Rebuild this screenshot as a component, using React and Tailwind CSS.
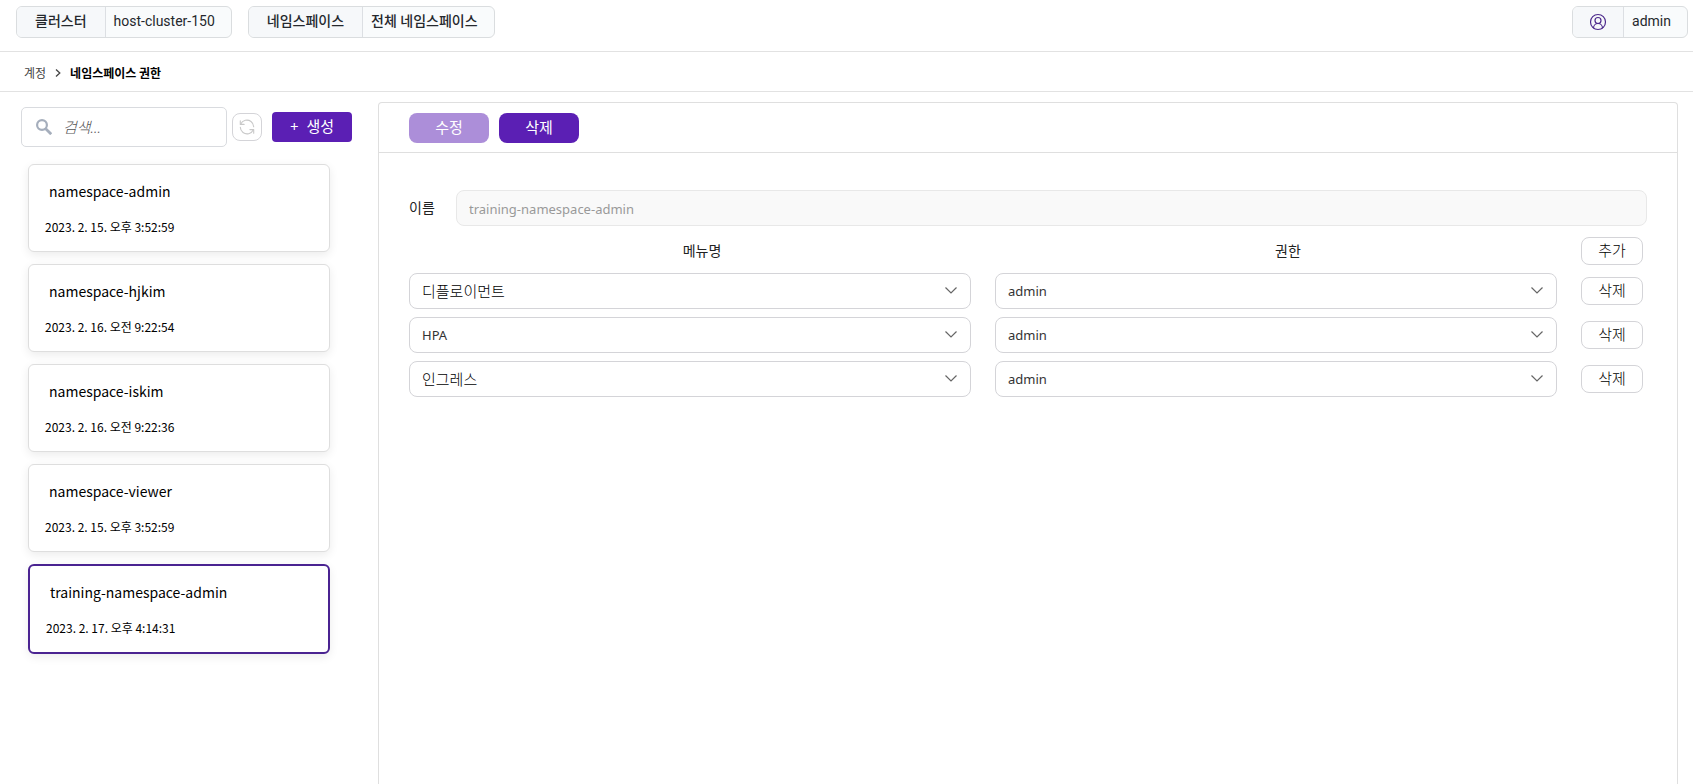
import { useState } from "react";
import { CircleUserRound } from "lucide-react";

const namespaces = [
  { name: "namespace-admin", date: "2023. 2. 15. 오후 3:52:59" },
  { name: "namespace-hjkim", date: "2023. 2. 16. 오전 9:22:54" },
  { name: "namespace-iskim", date: "2023. 2. 16. 오전 9:22:36" },
  { name: "namespace-viewer", date: "2023. 2. 15. 오후 3:52:59" },
  { name: "training-namespace-admin", date: "2023. 2. 17. 오후 4:14:31" },
];

const permissions = [
  { menu: "디플로이먼트", role: "admin" },
  { menu: "HPA", role: "admin" },
  { menu: "인그레스", role: "admin" },
];

const menuOptions = ["디플로이먼트", "HPA", "인그레스"];
const roleOptions = ["admin"];

const boxBase =
  "flex h-8 overflow-hidden rounded-md border border-[#dadddf] bg-[#f9fbfc] text-[#25282d]";
const boxLabel =
  "border-r border-[#dcdfe3] bg-[#f6f8fa] px-[18px] pt-1 leading-5 font-medium";
const smallButton =
  "h-7 w-[62px] rounded-[8px] border border-[#d4d4d8] bg-white pb-[2px] text-[15px] leading-5 font-light text-black";
const primaryButton = "h-[30px] w-20 bg-[#5b1fb4] pb-[2px] text-[15px] leading-5 text-white";
const gridRow = "grid grid-cols-[1fr_1fr_66px] items-center gap-x-6";

function SearchIcon() {
  return (
    <svg viewBox="0 0 16 16" className="h-4 w-4 shrink-0" fill="none" stroke="#a5aebc">
      <circle cx="6" cy="6" r="4.9" strokeWidth="2.2" />
      <path d="M9.7 9.7 15.2 15.2" strokeWidth="2.8" />
    </svg>
  );
}

function RefreshIcon() {
  return (
    <svg
      viewBox="0 0 16 16"
      className="h-4 w-4"
      fill="none"
      stroke="#c8c8c8"
      strokeWidth="1.1"
      strokeLinecap="round"
      strokeLinejoin="round"
    >
      <path d="M1.3 1.8v3.6h3.8" />
      <path d="M1.6 5.2C3.6 1 8.6 0 12 2.5c1.7 1.3 2.6 3.2 2.7 5.2" />
      <path d="M14.7 14.2v-3.6h-3.8" />
      <path d="M14.4 10.8C12.4 15 7.4 16 4 13.5 2.3 12.2 1.4 10.3 1.3 8.3" />
    </svg>
  );
}

function SelectBox({ label, value, options, onChange }) {
  const isLatin = /^[a-z]/i.test(value);

  return (
    <div className="relative">
      <select
        aria-label={label}
        value={value}
        onChange={(e) => onChange(e.target.value)}
        className={`h-9 w-full appearance-none rounded-[8px] border border-[#d4d4d8] bg-white px-3 ${
          isLatin ? "pt-[2px] text-[13px] text-[#333]" : "text-[15px] font-light text-black"
        }`}
      >
        {options.map((option) => (
          <option key={option}>{option}</option>
        ))}
      </select>
      <svg
        viewBox="0 0 12 7"
        className="pointer-events-none absolute top-[14px] right-[14px] h-[7px] w-3"
        fill="none"
        stroke="#666"
        strokeWidth="1.2"
      >
        <path d="M.5.5 6 6 11.5.5" />
      </svg>
    </div>
  );
}

export default function App() {
  const [selected, setSelected] = useState("training-namespace-admin");
  const [rows, setRows] = useState(permissions);

  const updateRow = (index, patch) =>
    setRows(rows.map((row, i) => (i === index ? { ...row, ...patch } : row)));

  return (
    <div className="flex min-h-screen flex-col bg-white font-['Noto_Sans','Noto_Sans_CJK_KR',sans-serif] text-black">
      <header className="flex h-[52px] items-start gap-4 border-b border-[#e2e2e2] pt-[6px] pr-[5px] pl-4 font-[Roboto,'Noto_Sans_CJK_KR',sans-serif] text-sm">
        <div className={boxBase}>
          <span className={boxLabel}>클러스터</span>
          <span className="pt-1 pr-4 pl-2 leading-5">host-cluster-150</span>
        </div>
        <div className={boxBase}>
          <span className={boxLabel}>네임스페이스</span>
          <span className="pt-1 pr-4 pl-2 leading-5 font-medium">전체 네임스페이스</span>
        </div>
        <div className={`${boxBase} ml-auto`}>
          <span className="flex items-center border-r border-[#dcdfe3] bg-[#f6f8fa] px-4">
            <CircleUserRound className="h-[18px] w-[18px] text-[#4d2a8c]" strokeWidth={1.6} />
          </span>
          <span className="pt-1 pr-4 pl-2 leading-5">admin</span>
        </div>
      </header>

      <nav className="flex h-10 items-center border-b border-[#e2e2e2] pt-[2px] pl-6 font-['Noto_Sans_CJK_KR',sans-serif] text-xs">
        <a href="#account" className="text-[#444]">계정</a>
        <svg viewBox="0 0 6 8" className="mx-[9px] h-2 w-[6px]" fill="none" stroke="#444" strokeWidth="1.3">
          <path d="M1 .5 4.8 4 1 7.5" />
        </svg>
        <span className="font-bold">네임스페이스 권한</span>
      </nav>

      <div className="flex flex-1">
        <aside className="w-[378px] shrink-0 pt-[15px] pl-[21px]">
          <div className="flex items-center">
            <label className="flex h-10 w-[206px] items-center gap-[11px] rounded-[5px] border border-[#d9dbdf] px-[14px]">
              <SearchIcon />
              <input
                type="text"
                aria-label="검색"
                placeholder="검색..."
                className="w-full min-w-0 text-[15px] font-light italic outline-none placeholder:text-[#555]"
              />
            </label>
            <button
              aria-label="새로고침"
              className="ml-[5px] flex h-7 w-[30px] items-center justify-center rounded-[8px] border border-[#d4d4d8]"
            >
              <RefreshIcon />
            </button>
            <button className={`${primaryButton} ml-[10px] rounded-[4px]`}>
              +&nbsp; 생성
            </button>
          </div>

          <div className="mt-[17px] mr-12 ml-[7px] flex flex-col gap-3 font-['Noto_Sans_CJK_KR',sans-serif]">
            {namespaces.map((item) => (
              <button
                key={item.name}
                onClick={() => setSelected(item.name)}
                className={`flex flex-col items-start gap-[14px] rounded-md bg-white px-4 py-[14px] text-left shadow-[0_3px_10px_rgba(0,0,0,0.08)] ${
                  selected === item.name ? "border-2 border-[#4a2391]" : "border border-[#dedede]"
                }`}
              >
                <span className="pl-1 text-sm leading-6">{item.name}</span>
                <span className="text-xs leading-5">{item.date}</span>
              </button>
            ))}
          </div>
        </aside>

        <main className="mt-[10px] mr-[15px] flex-1 rounded-t-[4px] border border-b-0 border-[#dfdfdf]">
          <div className="flex h-[50px] items-center gap-[10px] border-b border-[#dfdfdf] px-[30px]">
            <button disabled className={`${primaryButton} rounded-[8px] opacity-50`}>수정</button>
            <button className={`${primaryButton} rounded-[8px]`}>삭제</button>
          </div>

          <form className="px-[30px] pt-[37px]" onSubmit={(e) => e.preventDefault()}>
            <div className="flex items-center">
              <label htmlFor="name" className="w-[47px] text-sm text-[#222]">이름</label>
              <input
                id="name"
                type="text"
                disabled
                value={selected}
                className="h-9 flex-1 rounded-[8px] border border-[#e8e8e8] bg-[#f9f9f9] px-3 pt-[2px] text-[13px] text-[#999]"
              />
            </div>

            <div className={`${gridRow} mt-[11px] mb-2 text-center text-sm text-[#222]`}>
              <span className="pl-6">메뉴명</span>
              <span className="pl-6">권한</span>
              <button
                type="button"
                className={smallButton}
                onClick={() => setRows([...rows, { menu: menuOptions[0], role: roleOptions[0] }])}
              >
                추가
              </button>
            </div>

            <div className="flex flex-col gap-2">
              {rows.map((row, i) => (
                <div key={i} className={gridRow}>
                  <SelectBox
                    label="메뉴명"
                    value={row.menu}
                    options={menuOptions}
                    onChange={(menu) => updateRow(i, { menu })}
                  />
                  <SelectBox
                    label="권한"
                    value={row.role}
                    options={roleOptions}
                    onChange={(role) => updateRow(i, { role })}
                  />
                  <button
                    type="button"
                    className={smallButton}
                    onClick={() => setRows(rows.filter((_, index) => index !== i))}
                  >
                    삭제
                  </button>
                </div>
              ))}
            </div>
          </form>
        </main>
      </div>
    </div>
  );
}
